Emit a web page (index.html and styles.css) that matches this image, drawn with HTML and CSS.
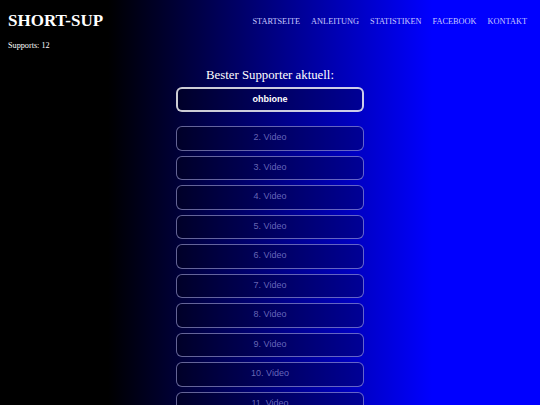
FILE: index.html
```html
<!DOCTYPE html>
<html lang="de">
<head>
<meta charset="utf-8">
<title>SHORT-SUP</title>
<link rel="stylesheet" href="styles.css">
</head>
<body>
<header class="top">
  <div class="brand">SHORT-SUP</div>
  <nav class="nav">
    <a href="#">STARTSEITE</a>
    <a href="#">ANLEITUNG</a>
    <a href="#">STATISTIKEN</a>
    <a href="#">FACEBOOK</a>
    <a href="#">KONTAKT</a>
  </nav>
</header>
<div class="supports">Supports: 12</div>
<main class="main">
  <h2 class="heading">Bester Supporter aktuell:</h2>
  <div class="box best">ohbione</div>
  <div class="list">
    <div class="box video">2. Video</div>
    <div class="box video">3. Video</div>
    <div class="box video">4. Video</div>
    <div class="box video">5. Video</div>
    <div class="box video">6. Video</div>
    <div class="box video">7. Video</div>
    <div class="box video">8. Video</div>
    <div class="box video">9. Video</div>
    <div class="box video">10. Video</div>
    <div class="box video">11. Video</div>
    <div class="box video">12. Video</div>
  </div>
</main>
</body>
</html>
```
FILE: styles.css
```css
html, body {
  margin: 0;
  padding: 0;
}
body {
  min-height: 100vh;
  background: linear-gradient(to right, #000 20%, #00f 80%);
  color: #fff;
  font-family: "Liberation Serif", "Times New Roman", serif;
}
.top {
  display: flex;
  justify-content: space-between;
  align-items: center;
  padding: 11px 13px 0 8px;
}
.brand {
  font-size: 17px;
  font-weight: bold;
  line-height: 20px;
}
.nav {
  display: flex;
  gap: 11px;
}
.nav a {
  color: #c8c8ff;
  text-decoration: none;
  font-size: 8.3px;
}
.supports {
  font-size: 8.2px;
  padding: 10px 0 0 8px;
  line-height: 10px;
}
.main {
  display: flex;
  flex-direction: column;
  align-items: center;
  padding-top: 17px;
}
.heading {
  margin: 0 0 4px;
  font-weight: normal;
  font-size: 12.8px;
  line-height: 15px;
}
.box {
  box-sizing: border-box;
  width: 188px;
  border-radius: 6px;
  text-align: center;
  font-family: "Liberation Sans", Arial, sans-serif;
  font-size: 9px;
  background: rgba(0, 0, 0, 0.25);
}
.best {
  height: 25px;
  line-height: 21px;
  border: 2px solid rgba(255, 255, 255, 0.8);
  font-weight: bold;
  color: #fff;
}
.list {
  display: flex;
  flex-direction: column;
  gap: 5px;
  margin-top: 14px;
}
.video {
  height: 24.5px;
  line-height: 21.5px;
  border: 1.5px solid rgba(200, 200, 255, 0.5);
  color: rgba(190, 190, 255, 0.55);
}
```
